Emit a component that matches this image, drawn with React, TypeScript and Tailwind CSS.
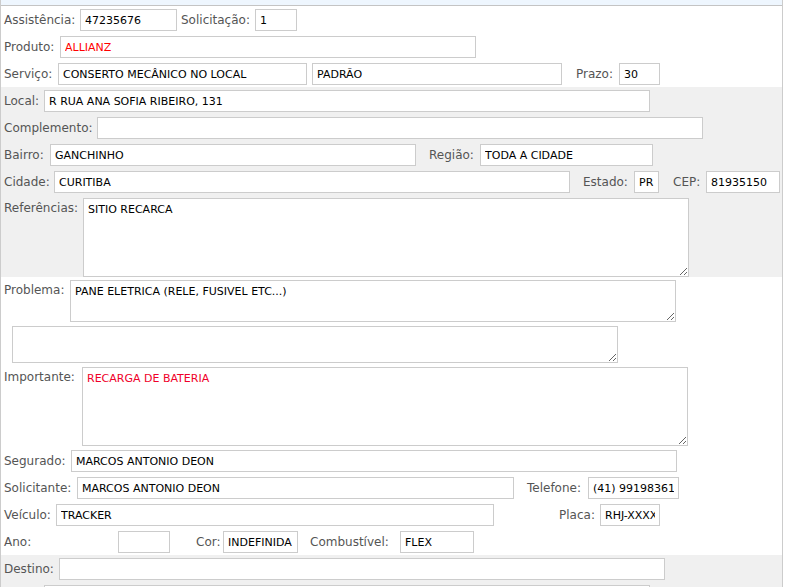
import React from 'react';

const labelCls = 'shrink-0 text-[12px] text-[#555] whitespace-nowrap';
const inputCls =
  'shrink-0 h-[22px] border border-[#ccc] bg-white px-[4px] text-[11px] outline-none';
const areaCls =
  'shrink-0 border border-[#ccc] bg-white px-[4px] py-[3px] text-[11px] outline-none';

type Part = {
  label?: string;
  labelW?: number;
  ml?: number;
  value?: string;
  w: number;
  red?: boolean;
};

// one line of the form: label / input pairs laid side by side
function Row({ parts, gray }: { parts: Part[]; gray?: boolean }) {
  return (
    <div className={`flex items-center pl-[3px] pt-[3px] pb-[2px] ${gray ? 'bg-[#f0f0f0]' : ''}`}>
      {parts.map((p, i) => (
        <React.Fragment key={i}>
          {p.label !== undefined && (
            <span className={labelCls} style={{ width: p.labelW, marginLeft: p.ml }}>
              {p.label}
            </span>
          )}
          <input
            readOnly
            value={p.value ?? ''}
            className={`${inputCls} ${p.red ? 'text-[#ff0000]' : 'text-black'}`}
            style={{ width: p.w }}
          />
        </React.Fragment>
      ))}
    </div>
  );
}

function AreaRow({
  label,
  labelW,
  value,
  h,
  red,
  pad = 'pt-[3px] pb-[2px]',
}: {
  label?: string;
  labelW: number;
  value?: string;
  h: number;
  red?: boolean;
  pad?: string;
}) {
  return (
    <div className={`flex items-start pl-[3px] ${pad}`}>
      <span className={`${labelCls} pt-[1px]`} style={{ width: labelW }}>
        {label}
      </span>
      <textarea
        readOnly
        value={value ?? ''}
        className={`${areaCls} ${red ? 'text-[#f0002a]' : 'text-black'}`}
        style={{ width: 606, height: h }}
      />
    </div>
  );
}

export default function App() {
  return (
    <div
      className="w-[783px] min-h-[587px] border-x border-[#ccc] bg-white"
      style={{ fontFamily: '"DejaVu Sans", Verdana, sans-serif' }}
    >
      <div className="h-[6px] bg-[#eef6fe] border-b border-[#c4c4c4]" />

      <Row
        parts={[
          { label: 'Assistência:', labelW: 76, value: '47235676', w: 97 },
          { label: 'Solicitação:', labelW: 74, ml: 4, value: '1', w: 42 },
        ]}
      />
      <Row parts={[{ label: 'Produto:', labelW: 56, value: 'ALLIANZ', w: 416, red: true }]} />
      <Row
        parts={[
          { label: 'Serviço:', labelW: 54, value: 'CONSERTO MECÂNICO NO LOCAL', w: 249 },
          { label: '', labelW: 5, value: 'PADRÃO', w: 250 },
          { label: 'Prazo:', labelW: 43, ml: 14, value: '30', w: 41 },
        ]}
      />

      <div className="bg-[#f0f0f0]">
        <Row parts={[{ label: 'Local:', labelW: 40, value: 'R RUA ANA SOFIA RIBEIRO, 131', w: 606 }]} />
        <Row parts={[{ label: 'Complemento:', labelW: 93, value: '', w: 606 }]} />
        <Row
          parts={[
            { label: 'Bairro:', labelW: 46, value: 'GANCHINHO', w: 366 },
            { label: 'Região:', labelW: 51, ml: 13, value: 'TODA A CIDADE', w: 173 },
          ]}
        />
        <Row
          parts={[
            { label: 'Cidade:', labelW: 50, value: 'CURITIBA', w: 516 },
            { label: 'Estado:', labelW: 51, ml: 13, value: 'PR', w: 25 },
            { label: 'CEP:', labelW: 33, ml: 14, value: '81935150', w: 74 },
          ]}
        />
        <AreaRow label="Referências:" labelW={79} value="SITIO RECARCA" h={79} pad="pt-[3px] pb-[0px]" />
      </div>

      <AreaRow label="Problema:" labelW={66} value="PANE ELETRICA (RELE, FUSIVEL ETC...)" h={42} />
      <AreaRow labelW={8} h={37} pad="pt-[2px] pb-[1px]" />
      <AreaRow label="Importante:" labelW={78} value="RECARGA DE BATERIA" h={79} red pad="pt-[3px] pb-[1px]" />

      <Row parts={[{ label: 'Segurado:', labelW: 67, value: 'MARCOS ANTONIO DEON', w: 606 }]} />
      <Row
        parts={[
          { label: 'Solicitante:', labelW: 73, value: 'MARCOS ANTONIO DEON', w: 437 },
          { label: 'Telefone:', labelW: 61, ml: 13, value: '(41) 991983612', w: 91 },
        ]}
      />
      <Row
        parts={[
          { label: 'Veículo:', labelW: 52, value: 'TRACKER', w: 438 },
          { label: 'Placa:', labelW: 41, ml: 65, value: 'RHJ-XXXX', w: 60 },
        ]}
      />
      <Row
        parts={[
          { label: 'Ano:', labelW: 114, value: '', w: 52 },
          { label: 'Cor:', labelW: 27, ml: 26, value: 'INDEFINIDA', w: 75 },
          { label: 'Combustível:', labelW: 90, ml: 12, value: 'FLEX', w: 74 },
        ]}
      />

      <div className="bg-[#f0f0f0]">
        <Row parts={[{ label: 'Destino:', labelW: 55, value: '', w: 606 }]} />
        <Row parts={[{ label: '', labelW: 40, value: '', w: 606 }]} />
      </div>
    </div>
  );
}
